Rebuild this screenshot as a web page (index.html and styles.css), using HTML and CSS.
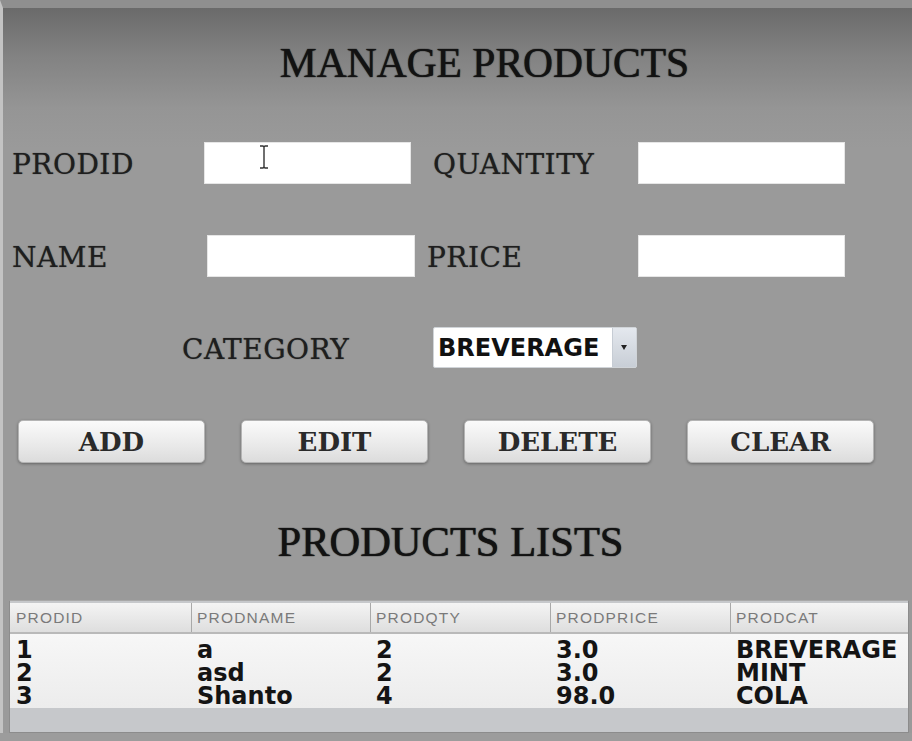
FILE: index.html
```html
<!DOCTYPE html>
<html lang="en">
<head>
    <meta charset="UTF-8">
    <meta name="viewport" content="width=device-width, initial-scale=1.0">
    <title>Manage Products</title>
    <link rel="stylesheet" href="styles.css">
</head>
<body>
    <div class="window">
        <h1 class="title">MANAGE PRODUCTS</h1>

        <form class="product-form">
            <div class="form-grid">
                <label class="field-label" for="prodid">PRODID</label>
                <div class="input-wrap">
                    <input type="text" id="prodid" class="field-input">
                    <svg class="ibeam" width="10" height="24" viewBox="0 0 10 24">
                        <path d="M1 1h3l1 1 1-1h3M5 2v20M1 23h3l1-1 1 1h3" fill="none" stroke="#333" stroke-width="1.4"/>
                    </svg>
                </div>
                <label class="field-label right" for="qty">QUANTITY</label>
                <input type="text" id="qty" class="field-input">

                <label class="field-label" for="name">NAME</label>
                <input type="text" id="name" class="field-input shift">
                <label class="field-label right price" for="price">PRICE</label>
                <input type="text" id="price" class="field-input">
            </div>

            <div class="category-row">
                <label class="field-label cat" for="category">CATEGORY</label>
                <div class="select-box">
                    <span class="select-value">BREVERAGE</span>
                    <span class="select-arrow"></span>
                </div>
            </div>

            <div class="button-row">
                <button type="button" class="btn">ADD</button>
                <button type="button" class="btn">EDIT</button>
                <button type="button" class="btn">DELETE</button>
                <button type="button" class="btn">CLEAR</button>
            </div>
        </form>

        <h2 class="title list-title">PRODUCTS LISTS</h2>

        <div class="table-box">
            <div class="table-head">
                <div>PRODID</div>
                <div>PRODNAME</div>
                <div>PRODQTY</div>
                <div>PRODPRICE</div>
                <div>PRODCAT</div>
            </div>
            <div class="table-body">
                <div class="table-row">
                    <div>1</div><div>a</div><div>2</div><div>3.0</div><div>BREVERAGE</div>
                </div>
                <div class="table-row">
                    <div>2</div><div>asd</div><div>2</div><div>3.0</div><div>MINT</div>
                </div>
                <div class="table-row">
                    <div>3</div><div>Shanto</div><div>4</div><div>98.0</div><div>COLA</div>
                </div>
            </div>
        </div>
    </div>
</body>
</html>
```

FILE: styles.css
```css
body {
    margin: 0;
    padding: 0;
    background-color: #9c9c9c;
    font-family: "DejaVu Serif", serif;
    color: #1e1e1e;
}

.window {
    height: 733px;
    box-sizing: border-box;
    border-top: 8px solid #8f8f8f;
    border-left: 3px solid #c3c3c3;
    background: linear-gradient(#6a6a6a 0px, #838383 50px, #959595 100px, #9a9a9a 140px);
    overflow: hidden;
}

.title {
    margin: 32px 0 0;
    padding-left: 54px;
    font-family: "Liberation Serif", serif;
    font-size: 41.5px;
    font-weight: normal;
    line-height: 46px;
    text-align: center;
    color: #121212;
    text-shadow: 0 0 1px #222, 0 0 1px #222;
}

.product-form {
    margin-top: 56px;
}

.form-grid {
    display: grid;
    grid-template-columns: 192px 207px 227px 209px;
    grid-auto-rows: 42px;
    row-gap: 51px;
    padding-left: 9px;
    align-items: center;
}

.field-label {
    padding-top: 3px;
    font-size: 28px;
    letter-spacing: 0.5px;
    line-height: 30px;
    color: #1e1e1e;
    text-shadow: 0 0 1px #444;
}

.field-label.right {
    padding-left: 22px;
}

.field-label.price {
    padding-left: 16px;
}

.input-wrap {
    position: relative;
    height: 42px;
}

.field-input {
    display: block;
    width: 207px;
    height: 42px;
    box-sizing: border-box;
    border: 1px solid #e6e6e6;
    background-color: #fff;
    margin: 0;
}

.shift {
    margin-left: 3px;
    width: 208px;
}

.ibeam {
    position: absolute;
    left: 55px;
    top: 3px;
}

.category-row {
    display: flex;
    align-items: center;
    margin-top: 50px;
    padding-left: 179px;
}

.field-label.cat {
    width: 251px;
    padding-top: 5px;
}

.select-box {
    display: flex;
    width: 204px;
    height: 41px;
    box-sizing: border-box;
    background-color: #fff;
    border: 1px solid #d0d4d8;
    border-radius: 2px;
}

.select-value {
    flex: 1;
    padding-left: 4px;
    font-family: "DejaVu Sans", sans-serif;
    font-weight: bold;
    font-size: 24px;
    line-height: 41px;
    color: #111;
}

.select-arrow {
    position: relative;
    width: 23px;
    background: linear-gradient(#e4e8ee, #c8ced6);
    border-left: 1px solid #c6ccd4;
}

.select-arrow::after {
    content: "";
    position: absolute;
    left: 8px;
    top: 17px;
    border-left: 3px solid transparent;
    border-right: 3px solid transparent;
    border-top: 5px solid #222;
}

.button-row {
    display: flex;
    gap: 36px;
    margin-top: 52px;
    padding-left: 15px;
}

.btn {
    width: 187px;
    height: 43px;
    margin: 0;
    padding: 0;
    border: 1px solid #b4b4b4;
    border-radius: 5px;
    background: linear-gradient(#fafafa, #e9e9e9 60%, #dcdcdc);
    box-shadow: 0 1px 3px rgba(0, 0, 0, 0.35);
    font-family: "DejaVu Serif", serif;
    font-weight: bold;
    font-size: 26px;
    color: #2a2a2a;
    cursor: pointer;
}

.list-title {
    margin-top: 56px;
    padding-left: 0;
    padding-right: 14px;
    font-size: 42.5px;
}

.table-box {
    margin: 35px 3px 0 6px;
    height: 133px;
    box-sizing: border-box;
    border: 1px solid #8c8c8c;
    border-top-color: #a8a8a8;
    padding-top: 2px;
    background-color: #c6c8cb;
}

.table-head,
.table-row {
    display: grid;
    grid-template-columns: 181px 179px 180px 180px 1fr;
}

.table-head {
    height: 29px;
    background: linear-gradient(#f4f4f4, #dedede);
    border-bottom: 2px solid #b9b9b9;
}

.table-head div {
    padding-left: 5px;
    border-left: 1px solid #a9a9a9;
    font-family: "Liberation Sans", sans-serif;
    font-size: 15.5px;
    letter-spacing: 1.2px;
    line-height: 29px;
    color: #7a7a7a;
}

.table-head div:first-child {
    border-left: none;
    padding-left: 6px;
}

.table-body {
    padding-top: 5px;
    background: linear-gradient(#f7f7f7, #ececec);
}

.table-row div {
    padding-left: 6px;
    font-family: "DejaVu Sans", sans-serif;
    font-weight: bold;
    font-size: 24px;
    line-height: 23px;
    color: #141414;
}

.table-row div:first-child {
    padding-left: 6px;
}
```
